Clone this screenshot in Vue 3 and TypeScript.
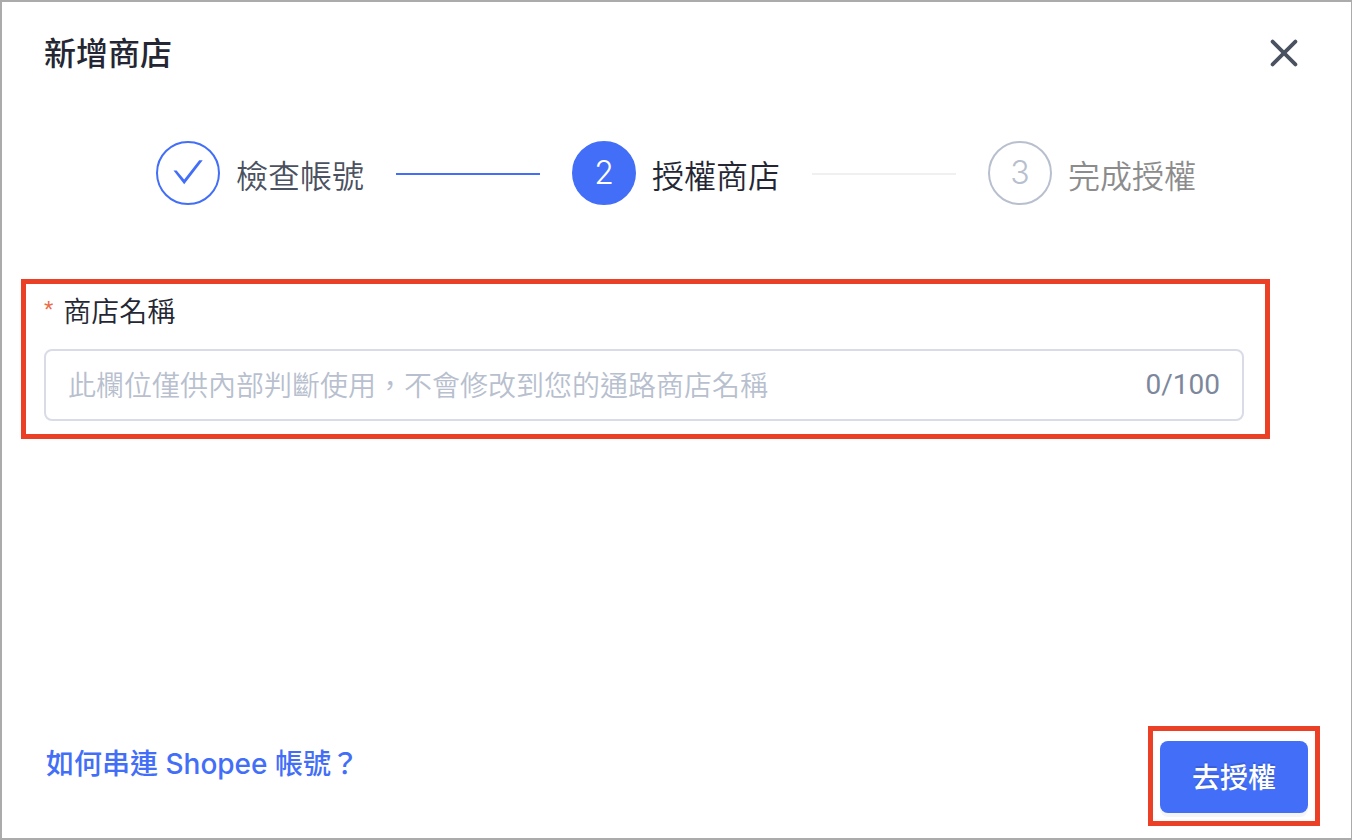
<script setup lang="ts">
import { computed, ref } from 'vue'

type StepState = 'done' | 'active' | 'pending'

interface Step {
  label: string
  state: StepState
}

const MAX_LENGTH = 100

const steps: Step[] = [
  { label: '檢查帳號', state: 'done' },
  { label: '授權商店', state: 'active' },
  { label: '完成授權', state: 'pending' },
]

const shopName = ref('')
const counter = computed(() => `${shopName.value.length}/${MAX_LENGTH}`)
</script>

<template>
  <main class="dialog" role="dialog" aria-labelledby="dialog-title">
    <header class="header">
      <h1 id="dialog-title" class="title">新增商店</h1>
      <button class="close" type="button" aria-label="關閉">
        <svg width="28" height="28" viewBox="0 0 28 28" fill="none" aria-hidden="true">
          <path d="M2.6 2.6 25.4 25.4M25.4 2.6 2.6 25.4" stroke="#4a5160" stroke-width="3.8" stroke-linecap="round" />
        </svg>
      </button>
    </header>

    <ol class="steps">
      <template v-for="(step, i) in steps" :key="step.label">
        <li class="step" :class="step.state">
          <span class="marker">
            <svg v-if="step.state === 'done'" width="32" height="32" viewBox="0 0 32 32" aria-hidden="true">
              <path d="M1.5 13.5H4.6L12.2 22.4 27.2 3.3H30.7L12.2 27.2Z" fill="#426ef8" />
            </svg>
            <template v-else>{{ i + 1 }}</template>
          </span>
          <span class="label">{{ step.label }}</span>
        </li>
        <li v-if="i < steps.length - 1" class="line" :class="step.state" aria-hidden="true"></li>
      </template>
    </ol>

    <form id="shop-form" class="field highlight" @submit.prevent>
      <label class="field-label" for="shop-name"><span class="required">*</span>商店名稱</label>
      <div class="input-box">
        <input
          id="shop-name"
          v-model="shopName"
          type="text"
          required
          :maxlength="MAX_LENGTH"
          placeholder="此欄位僅供內部判斷使用，不會修改到您的通路商店名稱"
        />
        <span class="counter">{{ counter }}</span>
      </div>
    </form>

    <footer class="footer">
      <a class="help" href="#">如何串連 Shopee 帳號？</a>
      <div class="action highlight">
        <button class="submit" type="submit" form="shop-form">去授權</button>
      </div>
    </footer>
  </main>
</template>

<style>
body {
  margin: 0;
  background: #fff;
}
</style>

<style scoped>
.dialog {
  box-sizing: border-box;
  min-height: 100vh;
  display: flex;
  flex-direction: column;
  border: 2px solid #ababab;
  border-right-width: 1px;
  font-family: Inter, "Noto Sans CJK TC", sans-serif;
  font-size: 28px;
  line-height: 40px;
  color: #242733;
}

.header {
  display: flex;
  align-items: flex-start;
  justify-content: space-between;
  padding: 28px 53px 0 42px;
}

.title {
  margin: 0;
  font-size: 32px;
  line-height: 48px;
  font-weight: 500;
}

.close {
  display: flex;
  margin-top: 9px;
  padding: 0;
  border: 0;
  background: none;
  cursor: pointer;
}

.steps {
  display: flex;
  align-items: flex-start;
  gap: 32px;
  margin: 0;
  padding: 63px 155px 0 154px;
  list-style: none;
}

.step {
  display: flex;
  gap: 16px;
  font-size: 32px;
  line-height: 64px;
}

.marker {
  box-sizing: border-box;
  display: flex;
  align-items: center;
  justify-content: center;
  width: 64px;
  height: 64px;
  border: 2px solid #426ef8;
  border-radius: 50%;
  font-size: 32px;
  font-weight: 350;
  font-family: Inter, sans-serif;
}

.label {
  padding-top: 4px;
  height: 60px;
  white-space: nowrap;
  font-weight: 350;
}

.done .label {
  color: #4a5160;
}

.active .marker {
  background: #426ef8;
  color: #fff;
}

.pending .marker {
  border-color: #b8bfce;
  color: #b8bfce;
}

.pending .label {
  color: #8c8c8c;
}

.line {
  flex: 1;
  height: 2px;
  margin-top: 32px;
  background: #f0f0f0;
}

.line.done {
  background: #426ef8;
}

.highlight {
  border: 5px solid #eb4026;
}

.field {
  margin: 74px 81px 0 19px;
  padding: 8px 21px 13px 18px;
}

.field-label {
  display: flex;
  gap: 10px;
  margin-bottom: 17px;
  font-weight: 350;
}

.required {
  color: #ed6a45;
  font-family: "Liberation Sans", Arial, sans-serif;
  font-size: 24px;
  line-height: 36px;
}

.input-box {
  display: flex;
  align-items: center;
  gap: 16px;
  height: 68px;
  padding: 0 22px;
  border: 2px solid #d9dbe7;
  border-radius: 8px;
}

.input-box input {
  flex: 1;
  min-width: 0;
  padding: 2px 0 0;
  border: 0;
  outline: 0;
  background: none;
  font: inherit;
  font-weight: 350;
  color: inherit;
}

.input-box input::placeholder {
  color: #b8bfce;
  opacity: 1;
}

.counter {
  color: #7d879c;
  font-family: Roboto, sans-serif;
}

.footer {
  display: flex;
  align-items: center;
  justify-content: space-between;
  margin-top: auto;
  padding: 0 31px 12px 44px;
}

.help {
  margin-bottom: 24px;
  color: #426ef8;
  font-weight: 500;
  text-decoration: none;
}

.action {
  padding: 10px 7px 8px;
}

.submit {
  display: block;
  height: 72px;
  padding: 2px 32px 0;
  border: 0;
  border-radius: 8px;
  background: #426ef8;
  box-shadow: 0 4px 0 rgba(0, 0, 0, 0.04);
  color: #fff;
  font: inherit;
  font-weight: 500;
  text-shadow: 0 -2px 0 rgba(0, 0, 0, 0.12);
  cursor: pointer;
}
</style>
